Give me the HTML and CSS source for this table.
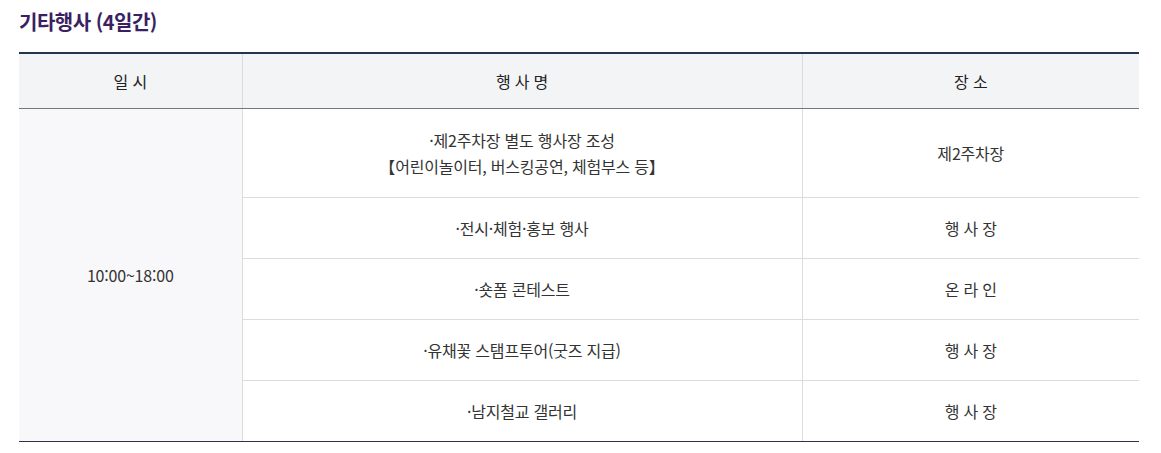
FILE: index.html
```html
<!DOCTYPE html>
<html lang="ko">
<head>
<meta charset="utf-8">
<link rel="stylesheet" href="styles.css">
</head>
<body>
<div class="wrap">
  <h3 class="title">기타행사 (4일간)</h3>
  <table class="tbl">
    <colgroup>
      <col class="c1"><col class="c2"><col class="c3">
    </colgroup>
    <thead>
      <tr><th>일 시</th><th>행 사 명</th><th>장 소</th></tr>
    </thead>
    <tbody>
      <tr>
        <td class="time" rowspan="5">10:00~18:00</td>
        <td class="first">·제2주차장 별도 행사장 조성<br>【어린이놀이터, 버스킹공연, 체험부스 등】</td>
        <td class="first">제2주차장</td>
      </tr>
      <tr><td>·전시·체험·홍보 행사</td><td>행 사 장</td></tr>
      <tr><td>·숏폼 콘테스트</td><td>온 라 인</td></tr>
      <tr><td>·유채꽃 스탬프투어(굿즈 지급)</td><td>행 사 장</td></tr>
      <tr class="last"><td>·남지철교 갤러리</td><td>행 사 장</td></tr>
    </tbody>
  </table>
</div>
</body>
</html>
```
FILE: styles.css
```css
html, body {
  margin: 0;
  padding: 0;
  background: #fff;
}
body {
  font-family: "Noto Sans CJK KR", "Noto Sans", sans-serif;
  color: #333;
}
.wrap {
  padding: 8px 22px 0 19px;
}
.title {
  margin: 0 0 16px;
  font-size: 20px;
  line-height: 28px;
  font-weight: 700;
  color: #3b1f63;
  letter-spacing: -0.5px;
}
.tbl {
  width: 1120px;
  border-collapse: collapse;
  border-top: 2px solid #243550;
  border-bottom: 1px solid #2e3548;
  font-size: 16px;
  letter-spacing: -0.2px;
}
.c1 { width: 223px; }
.c2 { width: 560px; }
.c3 { width: 337px; }
.tbl th {
  height: 54px;
  padding: 0;
  background: #f3f4f6;
  font-weight: 400;
  color: #222;
  text-align: center;
  border-left: 1px solid #dcdcdc;
  border-bottom: 1px solid #777;
  line-height: 24px;
}
.tbl th:first-child { border-left: 0; }
.tbl td {
  padding: 17px 10px;
  line-height: 26px;
  text-align: center;
  color: #333;
  border-left: 1px solid #dcdcdc;
  border-bottom: 1px solid #dcdcdc;
}
.tbl td.first {
  padding: 18px 10px;
}
.tbl td.time {
  border-left: 0;
  background: #f8f8fa;
  border-bottom: 1px solid #2e3548;
}
.tbl tr.last td {
  border-bottom: 1px solid #2e3548;
}
```
